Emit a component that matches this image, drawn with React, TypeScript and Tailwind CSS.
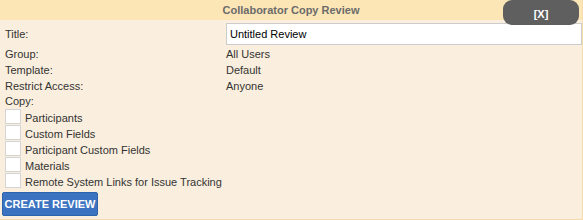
import React from "react";

const copyItems = [
  "Participants",
  "Custom Fields",
  "Participant Custom Fields",
  "Materials",
  "Remote System Links for Issue Tracking",
];

export default function App() {
  return (
    <div className="relative w-[583px] h-[220px] bg-[#faefde] border-r border-b border-[#f5dcaa] font-['Liberation_Sans',Arial,sans-serif] text-[11px] text-[#333]">
      <div className="h-[20px] bg-[#fce6b6] text-center font-bold text-[#6b6b6b] leading-[20px]">
        Collaborator Copy Review
      </div>
      <button className="absolute top-0 right-[3px] w-[76px] h-[25px] rounded-[9px] bg-[#5f5f5f] text-white font-bold text-[11px] leading-[25px] pt-[2px]">
        [X]
      </button>
      <div className="pl-[5px]">
        <div className="mt-[3px] flex items-center h-[22px]">
          <div className="w-[221px]">Title:</div>
          <input
            className="w-[356px] h-[22px] border border-[#cccccc] bg-white px-[3px] text-[11px] text-black outline-none"
            defaultValue="Untitled Review"
          />
        </div>
        <div className="mt-[1px] flex h-[16px] items-center">
          <div className="w-[221px]">Group:</div>
          <div>All Users</div>
        </div>
        <div className="flex h-[16px] items-center">
          <div className="w-[221px]">Template:</div>
          <div>Default</div>
        </div>
        <div className="flex h-[16px] items-center">
          <div className="w-[221px]">Restrict Access:</div>
          <div>Anyone</div>
        </div>
        <div className="flex h-[15px] items-center">
          <div>Copy:</div>
        </div>
        {copyItems.map((c) => (
          <div key={c} className="flex h-[16px] items-start">
            <div className="w-[16px] h-[15px] bg-white border border-[#d4d4d4]" />
            <div className="ml-[4px] leading-[16px] pt-[1px]">{c}</div>
          </div>
        ))}
        <button className="mt-[3px] -ml-[3px] w-[96px] h-[24px] bg-[#3b73c0] border border-[#2f64ad] rounded-[2px] text-white font-bold text-[11px]">
          CREATE REVIEW
        </button>
      </div>
    </div>
  );
}
